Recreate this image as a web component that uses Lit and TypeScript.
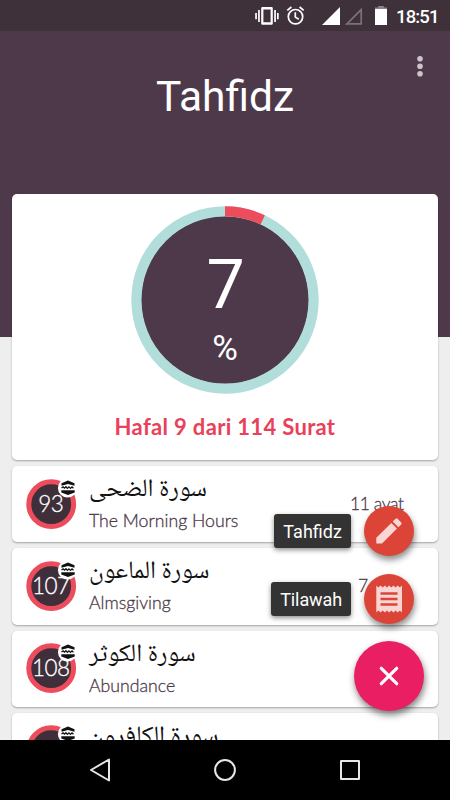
import { LitElement, html, css, svg } from "lit";
import { customElement, property } from "lit/decorators.js";

interface Surah {
  no?: number;
  arabic: string;
  name?: string;
  verses?: string;
}

const SURAHS: Surah[] = [
  { no: 93, arabic: "سورة الضحى", name: "The Morning Hours", verses: "11 ayat" },
  { no: 107, arabic: "سورة الماعون", name: "Almsgiving", verses: "7 ayat" },
  { no: 108, arabic: "سورة الكوثر", name: "Abundance" },
  { arabic: "سورة الكافرون" },
];

@customElement("status-bar")
export class StatusBar extends LitElement {
  static styles = css`
    :host { display: block; height: 31px; background: #3e313a; }
    svg { display: block; }
    text { font: 500 18.5px Roboto, sans-serif; fill: #fff; }
  `;
  render() {
    return html`<svg width="450" height="31" viewBox="0 0 450 31">
      <g fill="#fff">
        <path fill-rule="evenodd" d="M262.5 7h9q1.300 0 1.300 1.300v15.200q0 1.300-1.300 1.300h-9q-1.300 0-1.300-1.300V8.300q0-1.300 1.300-1.300zm.9 2.600v12.600h7.200V9.600z" />
        <path d="M258.100 10h1.700v12h-1.700zM255.200 13h1.700v6.200h-1.700zM274.200 10h1.700v12h-1.700zM277 13h1.700v6.200H277z" />
        <path d="M340 7v18h-18z" />
        <path d="M375 9h12v16h-12z" />
      </g>
      <path d="M375 9V7.500h3.200V6h5.600v1.500H387V9z" fill="#8b838a" />
      <path d="M361.200 9.600v14.300h-14.300z" fill="none" stroke="#7b7278" stroke-width="1.700" />
      <g fill="none" stroke="#fff" stroke-width="1.700">
        <circle cx="295.500" cy="16.700" r="7.200" />
        <path d="M295.300 12.300v4.800l3.500 2.200M287.300 10.300l4.100-3.300M299.600 7l4.100 3.300" />
      </g>
      <text x="396" y="22.800" textLength="43.500">18:51</text>
    </svg>`;
  }
}

@customElement("progress-ring")
export class ProgressRing extends LitElement {
  @property({ type: Number }) value = 0;
  static styles = css`
    :host { display: grid; width: 188px; height: 188px; }
    svg, .label { grid-area: 1 / 1; }
    svg { display: block; }
    .label { display: flex; flex-direction: column; align-items: center; color: #fff; font-family: Roboto, sans-serif; padding-top: 40px; }
    .num { font-size: 68px; line-height: 78px; padding-left: 1px; }
    .pct { font-size: 35px; line-height: 40px; margin-top: 5px; }
  `;
  render() {
    const r = 88.6;
    const c = 2 * Math.PI * r;
    return html`<svg width="188" height="188" viewBox="0 0 188 188">
        <circle cx="94" cy="94" r="84" fill="#4e394a" />
        <circle cx="94" cy="94" r=${r} fill="none" stroke="#b1dedb" stroke-width="10.200" />
        <circle cx="94" cy="94" r=${r} fill="none" stroke="#ed4c5c" stroke-width="10.200"
          stroke-dasharray="${(c * this.value) / 100} ${c}" transform="rotate(-90 94 94)" />
      </svg>
      <div class="label"><span class="num">${this.value}</span><span class="pct">%</span></div>`;
  }
}

@customElement("surah-card")
export class SurahCard extends LitElement {
  @property({ attribute: false }) item!: Surah;
  static styles = css`
    :host { display: flex; box-sizing: border-box; height: 76.300px; background: #fff; border-radius: 5px; box-shadow: 0 1px 2px rgba(0,0,0,.32); padding-left: 13.500px; }
    .badge { width: 52px; height: 52px; margin-top: 12.500px; overflow: visible; flex: none; }
    .badge text { font: 300 22.500px Lato, sans-serif; letter-spacing: -.5px; fill: #fff; stroke: #fff; stroke-width: .3px; }
    .names { margin-left: 11.500px; flex: 1; }
    .arabic { direction: rtl; width: max-content; font: 25px/30px "Noto Naskh Arabic", "Droid Arabic Naskh", "DejaVu Sans", sans-serif; color: #111; margin-top: 10px; white-space: nowrap; }
    .name { font: 300 17.700px/24px Lato, sans-serif; -webkit-text-stroke: .3px #4e394a; color: #4e394a; margin-top: 3.200px; white-space: nowrap; }
    .verses { width: 54px; margin: 25.500px 34px 0 0; font: 300 17.500px/24px Lato, sans-serif; letter-spacing: -.4px; -webkit-text-stroke: .3px #4e394a; color: #4e394a; white-space: nowrap; }
    .verses.short { padding-left: 8px; width: 46px; }
  `;
  render() {
    const s = this.item;
    return html`<svg class="badge" viewBox="0 0 52 52">
        <circle cx="25.200" cy="25.200" r="22.400" fill="#3e2f3b" stroke="#ed4c5c" stroke-width="5" />
        ${s.no ? svg`<text x="24.800" y="32.700" text-anchor="middle">${s.no}</text>` : null}
        <circle cx="41.500" cy="9" r="9.600" fill="#fff" />
        <path d="M35.500 4.300l6.500-2.800 6.500 2.800v2.400L42 5.100l-6.500 1.600z" fill="#111" />
        <path d="M35.500 9l1.600-1.100 1.300 1.300 1.500-1.500 1.500 1.700 1.500-1.500 1.600 1.500 1.500-1.500 1.500 1.300" fill="none" stroke="#111" stroke-width="1.300" />
        <path d="M35.300 11.300h13.400v2.200L42 15.900l-6.700-2.400z" fill="#111" />
      </svg>
      <div class="names">
        <div class="arabic">${s.arabic}</div>
        ${s.name ? html`<div class="name">${s.name}</div>` : null}
      </div>
      ${s.verses ? html`<div class="verses ${s.verses.length < 7 ? "short" : ""}">${s.verses}</div>` : null}`;
  }
}

@customElement("app-root")
export class AppRoot extends LitElement {
  static styles = css`
    :host { display: flex; flex-direction: column; position: relative; width: 450px; height: 800px; overflow: hidden; background: #eee; }
    .body { flex: 1; min-height: 0; overflow: hidden; background: linear-gradient(#4e394a 306px, #eee 306px); }
    .head { height: 163px; display: grid; grid-template-columns: 60px 1fr 60px; }
    h1 { grid-column: 2; margin: 39.500px 0 0; text-align: center; font: 400 42.500px/52px Roboto, sans-serif; color: #fff; }
    .more { width: 8px; height: 24px; margin: 23px 0 0 26px; }
    .list { display: flex; flex-direction: column; gap: 6px; padding: 0 12px; }
    .summary { height: 265.500px; box-sizing: border-box; background: #fff; border-radius: 5px; box-shadow: 0 1px 2px rgba(0,0,0,.32); display: flex; flex-direction: column; align-items: center; padding-top: 12px; margin-bottom: .5px; }
    .summary p { margin: 18px 0 0; font: 700 22px/30px Lato, sans-serif; letter-spacing: .33px; color: #e9415a; white-space: nowrap; }
    .nav { flex: none; height: 60px; background: #000; }
    .nav svg { display: block; }
    .fabs { position: absolute; right: 26.400px; bottom: 89px; display: flex; flex-direction: column; align-items: flex-end; }
    .mini { display: flex; align-items: center; margin: 0 10px 18px 0; }
    .mini.last { margin-bottom: 17px; }
    .tip { height: 34px; box-sizing: border-box; margin-right: 12.500px; border-radius: 3px; background: #333; color: #fff; font: 18px/35px Roboto, sans-serif; text-align: center; box-shadow: 0 2px 5px rgba(0,0,0,.45); white-space: nowrap; }
    .t1 { width: 77px; }
    .t2 { width: 80px; letter-spacing: -.1px; }
    .fab { border-radius: 50%; background: #db4437; width: 50px; height: 50px; box-shadow: 1px 4px 6px rgba(0,0,0,.45); }
    .main { width: 70px; height: 70px; background: #e91e63; box-shadow: 1px 4px 7px rgba(0,0,0,.5); }
    .fab svg { display: block; }
  `;
  render() {
    return html`
      <status-bar></status-bar>
      <div class="body">
        <div class="head">
          <h1>Tahfidz</h1>
          <svg class="more" viewBox="0 0 8 24" fill="#cbc4c9"><circle cx="4" cy="4.700" r="2.800" /><circle cx="4" cy="12.200" r="2.800" /><circle cx="4" cy="19.700" r="2.800" /></svg>
        </div>
        <div class="list">
          <div class="summary">
            <progress-ring value="7"></progress-ring>
            <p>Hafal 9 dari 114 Surat</p>
          </div>
          ${SURAHS.map((s) => html`<surah-card .item=${s}></surah-card>`)}
        </div>
      </div>
      <div class="nav">
        <svg width="450" height="60" viewBox="0 0 450 60" fill="none" stroke="#e6e6e6" stroke-width="2" stroke-linejoin="round">
          <path d="M91 30l18-10.500v21z" /><circle cx="225" cy="30" r="9.900" /><path d="M341 21h18v18h-18z" />
        </svg>
      </div>
      <div class="fabs">
        <div class="mini">
          <span class="tip t1">Tahfidz</span>
          <div class="fab"><svg width="50" height="50" viewBox="0 0 50 50" fill="#f9d5d3"><path d="M12.300 31.800L27.300 17l5.700 5.600-15 14.900h-5.700zM28.700 15.600l2.900-2.800q1-.9 2 0l3.600 3.600q.9 1 0 2l-2.800 2.800z" /></svg></div>
        </div>
        <div class="mini last">
          <span class="tip t2">Tilawah</span>
          <div class="fab"><svg width="50" height="50" viewBox="0 0 50 50"><path fill="#f9d5d3" d="M12.300 11.600l2.100 2 2.150-2 2.150 2 2.150-2 2.150 2 2.150-2 2.150 2 2.150-2 2.150 2 2.150-2 2.150 2 2.100-2v27l-2.100-2-2.150 2-2.150-2-2.150 2-2.150-2-2.150 2-2.150-2-2.150 2-2.150-2-2.150 2-2.150-2-2.100 2z" /><path d="M16.500 19.500h17M16.500 25h17M16.500 30.500h17" stroke="#db4437" stroke-width="2.600" /></svg></div>
        </div>
        <div class="fab main"><svg width="70" height="70" viewBox="0 0 70 70" stroke="#fff" stroke-width="3.200" stroke-linecap="round"><path d="M27.300 27.300l15.400 15.400M42.700 27.300L27.300 42.700" /></svg></div>
      </div>`;
  }
}
